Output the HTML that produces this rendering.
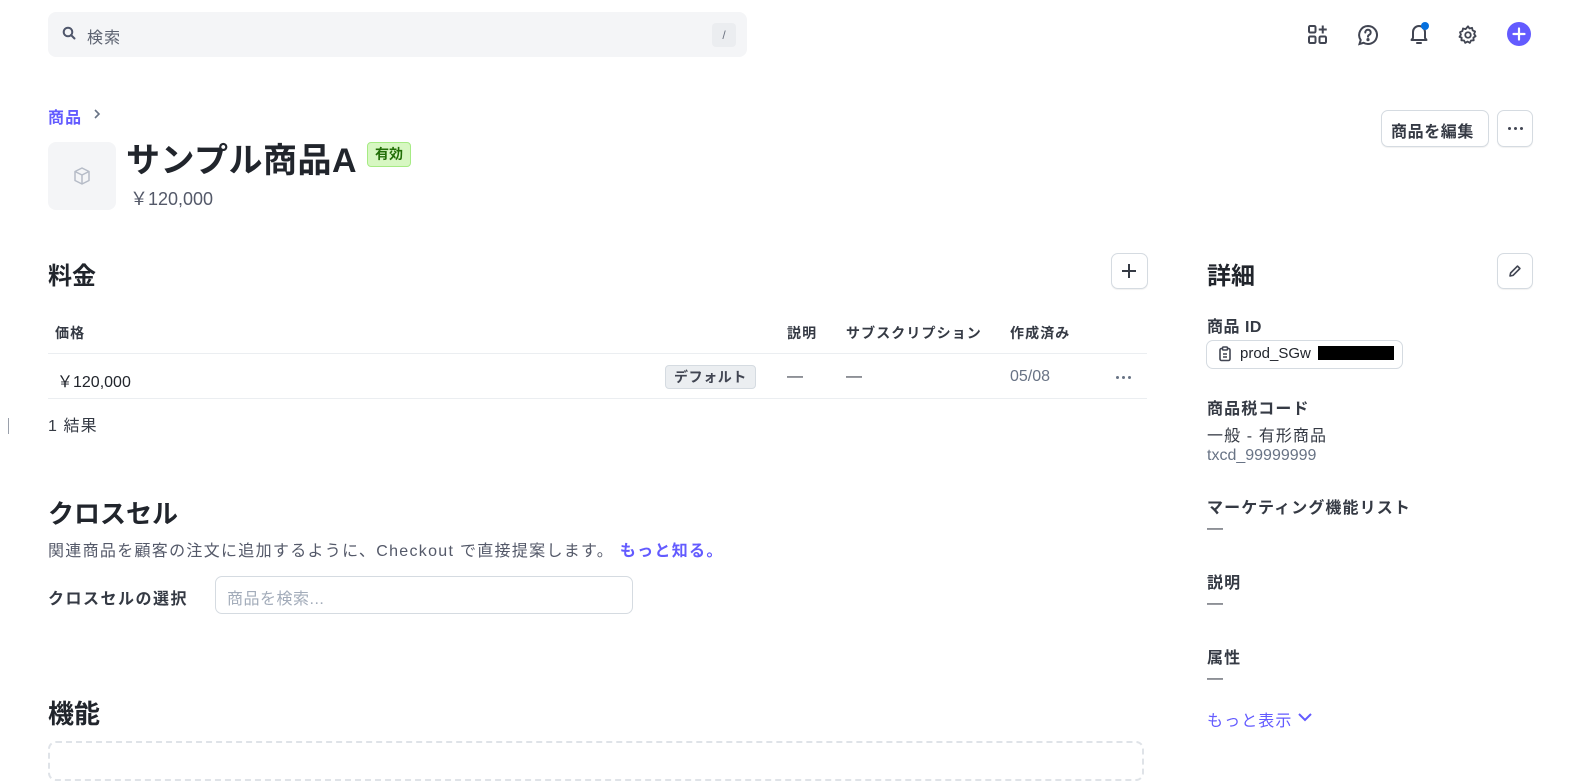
<!DOCTYPE html>
<html><head><meta charset="utf-8"><style>
*{box-sizing:border-box;margin:0;padding:0}
body{width:1581px;height:770px;overflow:hidden;background:#fff;font-family:"Liberation Sans","Noto Sans CJK JP",sans-serif;color:#353a44;position:relative}
.a{position:absolute;white-space:nowrap}
.j{letter-spacing:1.1px}
.b{font-weight:bold}
.btn{position:absolute;border:1px solid #d5dbe1;border-radius:7px;background:#fff;box-shadow:0 1px 1px rgba(0,0,0,.06)}
.h{color:#21252c;font-weight:bold}
.dots{position:absolute;display:flex;gap:3px}
.dots i{width:3px;height:3px;border-radius:50%;background:#414552;display:block}
</style></head><body>
<!-- search -->
<div class="a" style="left:48px;top:12px;width:699px;height:45px;background:#f4f5f7;border-radius:8px"></div>
<svg class="a" style="left:62px;top:26px" width="14" height="14" viewBox="0 0 14 14"><circle cx="6" cy="6" r="4.3" fill="none" stroke="#4f566b" stroke-width="2"/><path d="M9 9l3.5 3.5" stroke="#4f566b" stroke-width="2" stroke-linecap="round"/></svg>
<div class="a j" style="left:87px;top:24px;font-size:16px;color:#5c6270">検索</div>
<div class="a" style="left:712px;top:23px;width:24px;height:24px;background:#ebedf0;border-radius:4px;font-size:12px;color:#6c7280;text-align:center;line-height:24px">/</div>
<!-- top icons -->
<svg class="a" style="left:1307px;top:24px" width="22" height="22" viewBox="0 0 22 22" fill="none" stroke="#414552" stroke-width="2"><rect x="2" y="2" width="6.5" height="6.5" rx="1.2"/><rect x="2" y="12.5" width="6.5" height="6.5" rx="1.2"/><rect x="12.5" y="12.5" width="6.5" height="6.5" rx="1.2"/><path d="M15.75 1.5v8M11.75 5.5h8"/></svg>
<svg class="a" style="left:1357px;top:24px" width="22" height="22" viewBox="0 0 22 22" fill="none" stroke="#414552" stroke-width="2"><path d="M11 2a9 9 0 1 1-4.5 16.8L2.5 20l1.2-4A9 9 0 0 1 11 2z"/><path d="M8.3 8.5a2.7 2.7 0 1 1 3.8 2.4c-.8.4-1.1.9-1.1 1.8" stroke-linecap="round"/><circle cx="11" cy="15.6" r=".6" fill="#414552"/></svg>
<svg class="a" style="left:1407px;top:22px" width="24" height="24" viewBox="0 0 24 24" fill="none" stroke="#414552" stroke-width="2"><path d="M6 16V10a6 6 0 0 1 12 0v6l1.5 2h-15z" stroke-linejoin="round"/><path d="M10 21h4" stroke-linecap="round"/></svg>
<div class="a" style="left:1421px;top:22px;width:8px;height:8px;border-radius:50%;background:#0570de"></div>
<svg class="a" style="left:1457px;top:24px" width="22" height="22" viewBox="0 0 24 24" fill="none" stroke="#414552" stroke-width="2"><circle cx="12" cy="12" r="3"/><path d="M12 2.5l1.6 2.4 2.8-.7.7 2.8 2.6 1.2-1 2.7 1.6 2.4-2.4 1.6.3 2.9-2.9.2-1.3 2.6-2.5-1.4-2.5 1.4-1.3-2.6-2.9-.2.3-2.9L2.7 14l1.6-2.4-1-2.7 2.6-1.2.7-2.8 2.8.7z" stroke-linejoin="round"/></svg>
<div class="a" style="left:1507px;top:22px;width:24px;height:24px;border-radius:50%;background:#635bff"></div>
<svg class="a" style="left:1507px;top:22px" width="24" height="24"><path d="M12 6.5v11M6.5 12h11" stroke="#fff" stroke-width="2.2" stroke-linecap="round"/></svg>
<!-- header -->
<div class="a b j" style="left:48px;top:104px;font-size:16px;color:#635bff">商品</div>
<svg class="a" style="left:92px;top:108px" width="10" height="12"><path d="M3 2l4 4-4 4" fill="none" stroke="#687385" stroke-width="1.6"/></svg>
<div class="a" style="left:48px;top:142px;width:68px;height:68px;background:#f4f5f7;border-radius:8px"></div>
<svg class="a" style="left:71px;top:165px" width="22" height="22" viewBox="0 0 22 22" fill="none" stroke="#b6bcc7" stroke-width="1.5" stroke-linejoin="round"><path d="M11 3l7 3.5v9L11 19l-7-3.5v-9z"/><path d="M4 6.5L11 10l7-3.5M11 10v9"/></svg>
<div class="a h" style="left:126px;top:133px;font-size:34px;letter-spacing:0.5px">サンプル商品A</div>
<div class="a b" style="left:367px;top:142px;height:25px;padding:0 7px;background:#d7f7c2;border:1px solid #a6eb84;border-radius:4px;font-size:14px;line-height:23px;color:#216e07">有効</div>
<div class="a" style="left:130px;top:185px;font-size:18px;color:#545969">￥120,000</div>
<div class="btn" style="left:1381px;top:110px;width:108px;height:37px"></div>
<div class="a b" style="left:1391px;top:118px;font-size:16px;letter-spacing:0.6px">商品を編集</div>
<div class="btn" style="left:1497px;top:110px;width:36px;height:37px"></div>
<div class="dots" style="left:1508px;top:127px"><i></i><i></i><i></i></div>
<!-- pricing -->
<div class="a h" style="left:48px;top:256px;font-size:24px">料金</div>
<div class="btn" style="left:1111px;top:253px;width:37px;height:36px"></div>
<svg class="a" style="left:1120px;top:262px" width="18" height="18"><path d="M9 2v14M2 9h14" stroke="#353a44" stroke-width="2"/></svg>
<div class="a b j" style="left:55px;top:323px;font-size:14px">価格</div>
<div class="a b j" style="left:787px;top:323px;font-size:14px">説明</div>
<div class="a b j" style="left:846px;top:323px;font-size:14px">サブスクリプション</div>
<div class="a b j" style="left:1010px;top:323px;font-size:14px">作成済み</div>
<div class="a" style="left:48px;top:353px;width:1099px;height:1px;background:#ebeef1"></div>
<div class="a" style="left:57px;top:368px;font-size:16px;color:#21252c">￥120,000</div>
<div class="a b" style="left:665px;top:365px;height:24px;padding:0 8px;background:#ebeef1;border:1px solid #d5dbe1;border-radius:4px;font-size:14px;line-height:22px;color:#414552;letter-spacing:0.6px">デフォルト</div>
<div class="a" style="left:787px;top:368px;font-size:16px">—</div>
<div class="a" style="left:846px;top:368px;font-size:16px">—</div>
<div class="a" style="left:1010px;top:368px;font-size:16px;color:#687385">05/08</div>
<div class="dots" style="left:1116px;top:376px"><i style="background:#687385"></i><i style="background:#687385"></i><i style="background:#687385"></i></div>
<div class="a" style="left:48px;top:398px;width:1099px;height:1px;background:#ebeef1"></div>
<div class="a j" style="left:48px;top:412px;font-size:16px">1 結果</div>
<div class="a" style="left:8px;top:418px;width:1px;height:16px;background:#9aa0ab"></div>
<!-- cross-sell -->
<div class="a h" style="left:48px;top:494px;font-size:26px">クロスセル</div>
<div class="a" style="left:48px;top:537px;font-size:16px;color:#545969;letter-spacing:1.3px">関連商品を顧客の注文に追加するように、Checkout で直接提案します。 <span class="b" style="color:#635bff">もっと知る。</span></div>
<div class="a b" style="left:48px;top:585px;font-size:16px;color:#353a44;letter-spacing:1.5px">クロスセルの選択</div>
<div class="a" style="left:215px;top:576px;width:418px;height:38px;border:1px solid #d5dbe1;border-radius:7px;font-size:16px;color:#a3acba;padding:8px 11px;letter-spacing:0.5px">商品を検索...</div>
<div class="a h" style="left:48px;top:694px;font-size:26px">機能</div>
<div class="a" style="left:48px;top:741px;width:1096px;height:40px;border:2px dashed #dfe3e8;border-radius:8px"></div>
<!-- details -->
<div class="a h" style="left:1207px;top:256px;font-size:24px">詳細</div>
<div class="btn" style="left:1497px;top:253px;width:36px;height:36px"></div>
<svg class="a" style="left:1508px;top:264px" width="14" height="14" viewBox="0 0 14 14"><path d="M2 12l.6-3L9.5 2.1l2.4 2.4L5 11.4z" fill="none" stroke="#414552" stroke-width="1.6" stroke-linejoin="round"/></svg>
<div class="a b" style="left:1207px;top:313px;font-size:16px;letter-spacing:0.5px">商品 ID</div>
<div class="a" style="left:1206px;top:340px;width:197px;height:29px;border:1px solid #d5dbe1;border-radius:7px"></div>
<svg class="a" style="left:1218px;top:346px" width="14" height="16" viewBox="0 0 14 16" fill="none" stroke="#414552" stroke-width="1.6"><rect x="2" y="2.5" width="10" height="12" rx="1.5"/><rect x="4.5" y="1" width="5" height="3" rx="1" fill="#fff"/><path d="M5 8h4M5 11h4"/></svg>
<div class="a" style="left:1240px;top:345px;font-size:15px;color:#21252c">prod_SGw</div>
<div class="a" style="left:1318px;top:346px;width:76px;height:14px;background:#000"></div>
<div class="a b j" style="left:1207px;top:395px;font-size:16px">商品税コード</div>
<div class="a j" style="left:1207px;top:422px;font-size:16px">一般 - 有形商品</div>
<div class="a" style="left:1207px;top:447px;font-size:16px;color:#687385">txcd_99999999</div>
<div class="a b j" style="left:1207px;top:494px;font-size:16px">マーケティング機能リスト</div>
<div class="a" style="left:1207px;top:520px;font-size:16px">—</div>
<div class="a b j" style="left:1207px;top:569px;font-size:16px">説明</div>
<div class="a" style="left:1207px;top:595px;font-size:16px">—</div>
<div class="a b j" style="left:1207px;top:644px;font-size:16px">属性</div>
<div class="a" style="left:1207px;top:670px;font-size:16px">—</div>
<div class="a j" style="left:1207px;top:707px;font-size:16px;color:#635bff">もっと表示</div>
<svg class="a" style="left:1297px;top:711px" width="16" height="12"><path d="M2 3l6 6 6-6" fill="none" stroke="#635bff" stroke-width="2"/></svg>
</body></html>
